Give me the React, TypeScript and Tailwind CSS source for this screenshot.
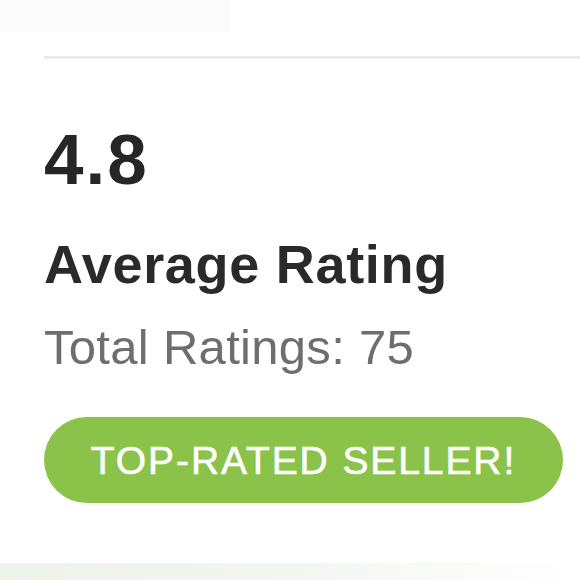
import React from "react";

export default function App() {
  return (
    <div
      className="w-[580px] h-[580px] overflow-hidden bg-white flex flex-col"
      style={{ fontFamily: '"Liberation Sans", Arial, sans-serif' }}
    >
      <div className="h-[32px] w-[230px] bg-[#fbfbfb] shrink-0" />
      <div className="mt-[24px] ml-[44px] h-[3px] bg-[#ececec] shrink-0" />
      <div className="pl-[44px] flex flex-col items-start">
        <div className="mt-[65px] text-[71px] leading-none font-bold tracking-[2px] text-[#262626]">4.8</div>
        <div className="mt-[42px] text-[54px] leading-none font-bold tracking-[0.7px] text-[#2a2a2a]">Average Rating</div>
        <div className="mt-[32px] text-[49px] leading-none tracking-[0.3px] text-[#6e6e6e]">Total Ratings: 75</div>
        <div className="mt-[45px] w-[519px] h-[86px] rounded-full bg-[#8bc34a] flex items-center justify-center">
          <span className="text-[39px] leading-none tracking-[1.9px] text-white [-webkit-text-stroke:0.6px_white]">TOP-RATED SELLER!</span>
        </div>
      </div>
      <div className="mt-[60px] h-[17px] w-full bg-gradient-to-r from-[#eef3ea] via-[#f3f6f1] to-white shrink-0" />
    </div>
  );
}
